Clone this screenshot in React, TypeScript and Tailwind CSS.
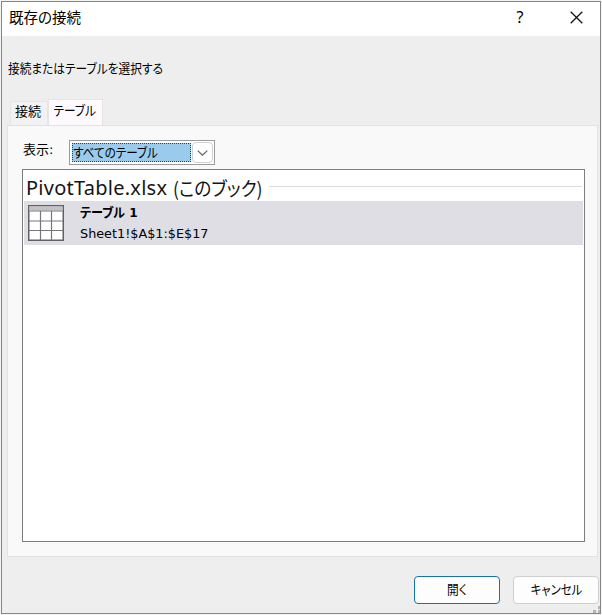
import React, { useState } from "react";

interface Connection {
  name: string;
  range: string;
}

const tables: Connection[] = [{ name: "テーブル 1", range: "Sheet1!$A$1:$E$17" }];

const TableIcon: React.FC = () => (
  <svg width="36" height="36" viewBox="0 0 36 36" fill="none">
    <rect x="0.75" y="0.75" width="34.5" height="34.5" fill="#fff" stroke="#626164" strokeWidth="1.5" />
    <rect x="1.5" y="1.5" width="33" height="4" fill="#c3c2c5" />
    <path d="M1 6H35M1 16H35M1 25.5H35M12.5 6V35M23.5 6V35" stroke="#77767a" strokeWidth="1.2" />
  </svg>
);

const App: React.FC = () => {
  const [selected, setSelected] = useState<number>(0);

  return (
    <div className="h-[615px] w-[602px] overflow-hidden bg-[#f4f4f4] p-px font-['DejaVu_Sans','Noto_Sans_CJK_JP',sans-serif] text-black [font-feature-settings:'palt']">
      <div className="relative flex h-[613px] w-[600px] flex-col border border-[#858585] bg-[#eeeeee]">
        <header className="flex h-[34px] shrink-0 items-center bg-white pl-[7px]">
          <h1 className="pb-[5px] font-['Noto_Sans_CJK_JP',sans-serif] text-[14.5px] leading-[27px] whitespace-nowrap">
            既存の接続
          </h1>
          <button className="ml-auto h-full w-8 pb-1 font-['Noto_Sans',sans-serif] text-[16px]" aria-label="Help">?</button>
          <button className="mr-[17px] ml-[34px] pb-1" aria-label="Close">
            <svg width="13" height="13" viewBox="0 0 13 13" stroke="#111" strokeWidth="1.3">
              <path d="M0.7 0.7L12.3 12.3M12.3 0.7L0.7 12.3" />
            </svg>
          </button>
        </header>

        <p className="mt-[23px] ml-1.5 h-5 w-fit origin-left scale-x-[0.9] text-[13px] leading-5 whitespace-nowrap">
          接続またはテーブルを選択する
        </p>

        <nav className="mt-5 ml-2 flex h-[26px] shrink-0 items-end text-[13px]">
          <button className="h-6 w-[38px] border border-b-0 border-[#e5e5e5] bg-[#f2f2f2] pr-0.5 pb-1 leading-[18px] whitespace-nowrap">
            接続
          </button>
          <button className="h-[26px] w-[55px] border border-b-0 border-[#e5e5e5] bg-[#fdf9fd] pr-0.5 pb-1 leading-[18px] whitespace-nowrap">
            <span className="inline-block scale-x-[0.9]">テーブル</span>
          </button>
        </nav>

        <section className="ml-[5px] flex h-[432px] w-[591px] shrink-0 flex-col border border-[#e2e2e2] bg-[#f9f9f9] pl-3.5">
          <div className="mt-3.5 flex h-[26px] shrink-0">
            <span className="w-[47px] pl-px text-[13px] leading-[20px] whitespace-nowrap">表示:</span>
            <div className="flex h-[25px] w-[146px] border border-[#9b9b9b] bg-white p-px">
              <div className="my-px ml-px flex h-[19px] w-[120px] items-center border border-dotted border-[#27465b] bg-[#9bcbec] text-[13px]">
                <span className="origin-left scale-x-[0.89] whitespace-nowrap">すべてのテーブル</span>
              </div>
              <button className="ml-px flex h-[21px] w-[21px] items-center justify-center rounded-sm border border-[#d0d0d0] bg-white" aria-label="表示">
                <svg width="11" height="6" viewBox="0 0 11 6" fill="none" stroke="#5c5c5c" strokeWidth="1.1">
                  <path d="M0.7 0.7L5.5 5.2L10.3 0.7" />
                </svg>
              </button>
            </div>
          </div>

          <div className="mt-[3px] h-[373px] w-[563px] border border-[#7d7d7d] bg-white p-px">
            <div className="flex h-[30px] items-center pr-px pl-0.5">
              <h2 className="flex w-[243px] shrink-0 pt-1 text-[20px] leading-6 whitespace-nowrap text-[#151515]">
                <span className="w-[149px] font-['Noto_Sans',sans-serif] tracking-[0.25px]">PivotTable.xlsx</span>
                <span className="origin-left scale-x-[0.93] font-['Noto_Sans_CJK_JP',sans-serif] text-[19px]">(このブック)</span>
              </h2>
              <div className="mt-px h-px flex-1 bg-[#d9dcde]" />
            </div>
            {tables.map((table, i) => (
              <button
                key={table.name}
                onClick={() => setSelected(i)}
                className={`flex h-11 w-[559px] pt-1 pl-1 text-left ${
                  selected === i ? "bg-[#dfdee4]" : "bg-white"
                }`}
              >
                <TableIcon />
                <span className="ml-4 flex flex-col text-[13px] whitespace-nowrap">
                  <span className="h-5 origin-left scale-x-[0.93] leading-4 font-bold">{table.name}</span>
                  <span className="w-fit origin-left scale-x-[0.985] leading-[18px]">{table.range}</span>
                </span>
              </button>
            ))}
          </div>
        </section>

        <footer className="mt-[19px] ml-[412px] flex gap-[13px] text-[13px]">
          <button className="h-7 w-[86px] rounded border border-[#1673ab] bg-[#fdfdfd] leading-6">
            <span className="inline-block scale-x-90">開く</span>
          </button>
          <button className="h-7 w-[86px] rounded border border-[#cecece] bg-[#fdfdfd] leading-6 whitespace-nowrap">
            <span className="inline-block scale-x-[0.88]">キャンセル</span>
          </button>
        </footer>

        {/* resize grip */}
        <svg className="absolute right-0 bottom-0" width="7" height="7" fill="#b4b4b4" shapeRendering="crispEdges">
          <path d="M5 0h2v3h-2zM0 4h3v3h-3zM5 4h2v3h-2z" />
        </svg>
      </div>
    </div>
  );
};

export default App;
